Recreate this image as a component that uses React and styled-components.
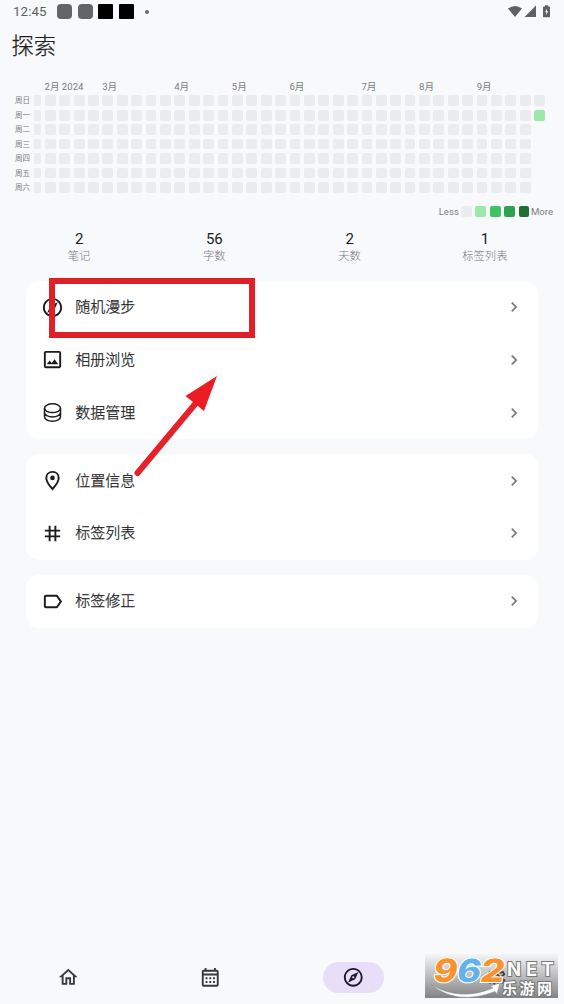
import React from 'react';
import styled, { createGlobalStyle } from 'styled-components';
import {
  MdOutlineExplore, MdOutlineImage, MdGrid3X3, MdLabelOutline,
  MdChevronRight, MdOutlineHome, MdOutlineCalendarMonth, MdOutlineSettings,
} from 'react-icons/md';

const Global = createGlobalStyle`
  * { box-sizing: border-box; }
  body { margin: 0; background: #f8f9fb; }
`;

const Screen = styled.div`
  position: relative;
  display: flex;
  flex-direction: column;
  width: 564px;
  height: 1004px;
  overflow: hidden;
  background: #f8f9fb;
  color: #1c1c1e;
  font-family: Roboto, 'Noto Sans CJK SC', sans-serif;
`;

const StatusBar = styled.header`
  display: flex;
  align-items: center;
  height: 23px;
  padding: 0 13px 0 13px;
  color: #5f6062;
`;
const Clock = styled.span`
  width: 44px;
  font-size: 13.3px;
  line-height: 24px;
  letter-spacing: 0.1px;
  white-space: nowrap;
`;
const Notice = styled.i`
  width: 15px;
  height: 15px;
  margin-right: 5.7px;
  border-radius: ${(p) => (p.$dark ? '1px' : '4px')};
  background: ${(p) => (p.$dark ? '#000' : '#646566')};
`;
const Dot = styled.i`
  width: 4px;
  height: 4px;
  margin-left: 5px;
  border-radius: 50%;
  background: #68696b;
`;
const SystemIcons = styled.svg`
  display: block;
  margin-left: auto;
`;

const Title = styled.h1`
  height: 56px;
  margin: 0;
  padding: 7px 0 0 11.5px;
  font-size: 22.3px;
  font-weight: 300;
  line-height: 32px;
  -webkit-text-stroke: 0.25px currentColor;
`;

const Calendar = styled.section`
  display: grid;
  grid-template-columns: 30px 511px;
  grid-template-rows: 16.4px 1fr;
  column-gap: 4px;
  height: 117px;
`;
const Months = styled.div`
  grid-column: 2;
  display: grid;
  grid-template-columns: repeat(35, 14.41px);
  padding-left: 10.5px;
`;
const Month = styled.span`
  grid-row: 1;
  grid-column: ${(p) => p.$week};
  font-size: 9.6px;
  line-height: 16px;
  color: #7b7c7f;
  white-space: nowrap;
`;
const Weekdays = styled.div`
  grid-column: 1;
  display: flex;
  flex-direction: column;
`;
const Weekday = styled.span`
  height: 14.43px;
  font-size: 7.5px;
  line-height: 12px;
  text-align: right;
  color: #7b7c7f;
`;
const Weeks = styled.div`
  display: flex;
  justify-content: flex-end;
  gap: 3.6px;
  overflow: hidden;
`;
const Week = styled.div`
  display: flex;
  flex: none;
  flex-direction: column;
  gap: 3.63px;
`;
const Day = styled.i`
  width: 10.8px;
  height: 10.8px;
  border-radius: 2px;
  background: ${(p) => p.$color || '#ebecee'};
`;

const Legend = styled.div`
  display: flex;
  align-items: center;
  justify-content: flex-end;
  gap: 3.6px;
  height: 31px;
  padding-right: 11px;
  font-size: 9.6px;
  color: #7b7c7f;

  span { letter-spacing: 0; }
  span:first-child { margin-right: -1.5px; }
  span:last-child { margin-left: -2px; }
`;

const Stats = styled.section`
  display: grid;
  grid-template-columns: repeat(4, 1fr);
  height: 54px;
  padding: 3px 11.5px 0;
`;
const Stat = styled.div`
  display: flex;
  flex-direction: column;
  align-items: center;
`;
const StatValue = styled.strong`
  font-size: 15px;
  font-weight: 400;
  line-height: 18px;
`;
const StatLabel = styled.span`
  font-size: 11.3px;
  font-weight: 300;
  line-height: 17px;
  color: #77787b;
`;

const Groups = styled.main`
  display: flex;
  flex: 1;
  flex-direction: column;
  gap: 15.4px;
  padding: 0 26px;
`;
const Group = styled.section`
  border-radius: 13px;
  background: #fff;
`;
const Row = styled.div`
  display: flex;
  align-items: center;
  height: 52.65px;
  padding: 0 14.5px 0 15px;

  svg { flex: none; }
`;
const RowLabel = styled.span`
  flex: 1;
  margin-left: 11.3px;
  font-size: 15px;
  font-weight: 300;
  line-height: 22px;
  -webkit-text-stroke: 0.25px currentColor;
`;

const NavBar = styled.nav`
  display: grid;
  grid-template-columns: repeat(4, 142.8px);
  justify-content: center;
  align-items: center;
  height: 53px;
  color: #37383c;
`;
const NavItem = styled.div`
  display: flex;
  align-items: center;
  justify-content: center;
  justify-self: center;
  width: 61px;
  height: 31px;
  border-radius: 16px;
  background: ${(p) => (p.$active ? '#e8def8' : 'transparent')};
  color: ${(p) => (p.$active ? '#1d192b' : 'inherit')};
`;

const Highlight = styled.div`
  position: absolute;
  left: 49px;
  top: 278px;
  width: 206px;
  height: 60px;
  border: 6px solid #e02028;
`;
const Arrow = styled.svg`
  position: absolute;
  left: 130px;
  top: 370px;
`;
const Watermark = styled.svg`
  position: absolute;
  left: 425px;
  top: 950px;
`;

const DataIcon = ({ size }) => (
  <svg width={size} height={size} viewBox="0 0 23 23" fill="none" stroke="currentColor" strokeWidth="1.5">
    <ellipse cx="11.5" cy="7.2" rx="8" ry="4.4" />
    <path d="M3.5 7.2V15.8C3.5 18.3 7 20.2 11.5 20.2S19.5 18.3 19.5 15.8V7.2M3.5 11.5C3.5 14 7 15.9 11.5 15.9S19.5 14 19.5 11.5" />
  </svg>
);
const PlaceIcon = ({ size }) => (
  <svg width={size} height={size} viewBox="0 0 24 24" fill="none" stroke="currentColor" strokeWidth="2">
    <path d="M12 3C8.1 3 5.5 5.8 5.5 9.5C5.5 13.3 8.6 17.3 12 20.9C15.4 17.3 18.5 13.3 18.5 9.5C18.5 5.8 15.9 3 12 3Z" />
    <circle cx="12" cy="9.3" r="2.4" fill="currentColor" stroke="none" />
  </svg>
);

const months = [
  ['2月 2024', 1], ['3月', 5], ['4月', 10], ['5月', 14],
  ['6月', 18], ['7月', 23], ['8月', 27], ['9月', 31],
];
const weekdays = ['周日', '周一', '周二', '周三', '周四', '周五', '周六'];
const levels = ['#ebecee', '#9be9a8', '#40c463', '#30a14e', '#216e39'];
const stats = [['2', '笔记'], ['56', '字数'], ['2', '天数'], ['1', '标签列表']];
const groups = [
  [[MdOutlineExplore, '随机漫步'], [MdOutlineImage, '相册浏览'], [DataIcon, '数据管理']],
  [[PlaceIcon, '位置信息'], [MdGrid3X3, '标签列表']],
  [[MdLabelOutline, '标签修正']],
];
const tabs = [MdOutlineHome, MdOutlineCalendarMonth, MdOutlineExplore, MdOutlineSettings];

export default function App() {
  return (
    <Screen>
      <Global />
      <StatusBar>
        <Clock>12:45</Clock>
        <Notice /><Notice /><Notice $dark /><Notice $dark /><Dot />
        <SystemIcons width="43" height="14" viewBox="0 0 43 14" fill="#5f6062">
          <path d="M0 3.5Q7 -1.5 14 3.5L7 12Z" />
          <path d="M28 0.5V12H16.5Z" />
          <path fillRule="evenodd" d="M37 0.2h3v1.3h1.2q.8 0 .8.8v9.2q0 .8-.8.8h-5.4q-.8 0-.8-.8V2.3q0-.8.8-.8H37ZM39 3.7 37 7.3h1.3v2.6l1.8-3.6h-1.1Z" />
        </SystemIcons>
      </StatusBar>
      <Title>探索</Title>
      <Calendar>
        <Months>
          {months.map(([name, week]) => <Month key={name} $week={week}>{name}</Month>)}
        </Months>
        <Weekdays>
          {weekdays.map((name) => <Weekday key={name}>{name}</Weekday>)}
        </Weekdays>
        <Weeks>
          {Array.from({ length: 36 }, (_, w) => (
            <Week key={w}>
              {Array.from({ length: w === 35 ? 2 : 7 }, (_, d) => (
                <Day key={d} $color={w === 35 && d === 1 ? levels[1] : undefined} />
              ))}
            </Week>
          ))}
        </Weeks>
      </Calendar>
      <Legend>
        <span>Less</span>
        {levels.map((color) => <Day key={color} $color={color} />)}
        <span>More</span>
      </Legend>
      <Stats>
        {stats.map(([value, label]) => (
          <Stat key={label}>
            <StatValue>{value}</StatValue>
            <StatLabel>{label}</StatLabel>
          </Stat>
        ))}
      </Stats>
      <Groups>
        {groups.map((rows, i) => (
          <Group key={i}>
            {rows.map(([Icon, label]) => (
              <Row key={label}>
                <Icon size={23} />
                <RowLabel>{label}</RowLabel>
                <MdChevronRight size={20} color="#77787b" />
              </Row>
            ))}
          </Group>
        ))}
      </Groups>
      <NavBar>
        {tabs.map((Icon, i) => (
          <NavItem key={i} $active={i === 2}><Icon size={22.5} /></NavItem>
        ))}
      </NavBar>
      <Highlight />
      <Arrow width="92" height="110" viewBox="0 0 92 110">
        <path d="M7.5 103 66 33" stroke="#e52129" strokeWidth="6" strokeLinecap="round" />
        <path d="M87 6 55.5 26 74 41Z" fill="#ec1c24" />
      </Arrow>
      <Watermark width="134" height="49" viewBox="0 0 134 49">
        <defs>
          <linearGradient id="plate" x1="0" y1="0" x2="0" y2="1">
            <stop offset="0" stopColor="#555" stopOpacity="0.02" />
            <stop offset="1" stopColor="#555" stopOpacity="0.72" />
          </linearGradient>
        </defs>
        <rect y="4" width="133" height="44" fill="url(#plate)" />
        <path d="M6 34.5Q35 52 68 38L65 36 75 33 72 44 70 41.5Q32 56 6 34.5Z" fill="#fff" stroke="#888" strokeWidth="0.5" />
        <g transform="translate(7 31.5) skewX(-10)" fontFamily="Inter, sans-serif" fontWeight="800" fontSize="32" stroke="#fff" strokeWidth="2" paintOrder="stroke">
          <text x="0" fill="#f7922d" textLength="24" lengthAdjust="spacingAndGlyphs">9</text>
          <text x="23.5" fill="#62b4e8" textLength="24" lengthAdjust="spacingAndGlyphs">6</text>
          <text x="47" fill="#f7922d" textLength="24" lengthAdjust="spacingAndGlyphs">2</text>
        </g>
        <g fontWeight="700" fill="#fff" stroke="#777" strokeWidth="2" paintOrder="stroke">
          <text x="82 101 116.5" y="25.5" fontFamily="Inter, sans-serif" fontSize="18.5">NET</text>
          <text x="77" y="43.5" fontFamily="'Noto Sans CJK SC', sans-serif" fontSize="15" textLength="50" lengthAdjust="spacing">乐游网</text>
        </g>
      </Watermark>
    </Screen>
  );
}
